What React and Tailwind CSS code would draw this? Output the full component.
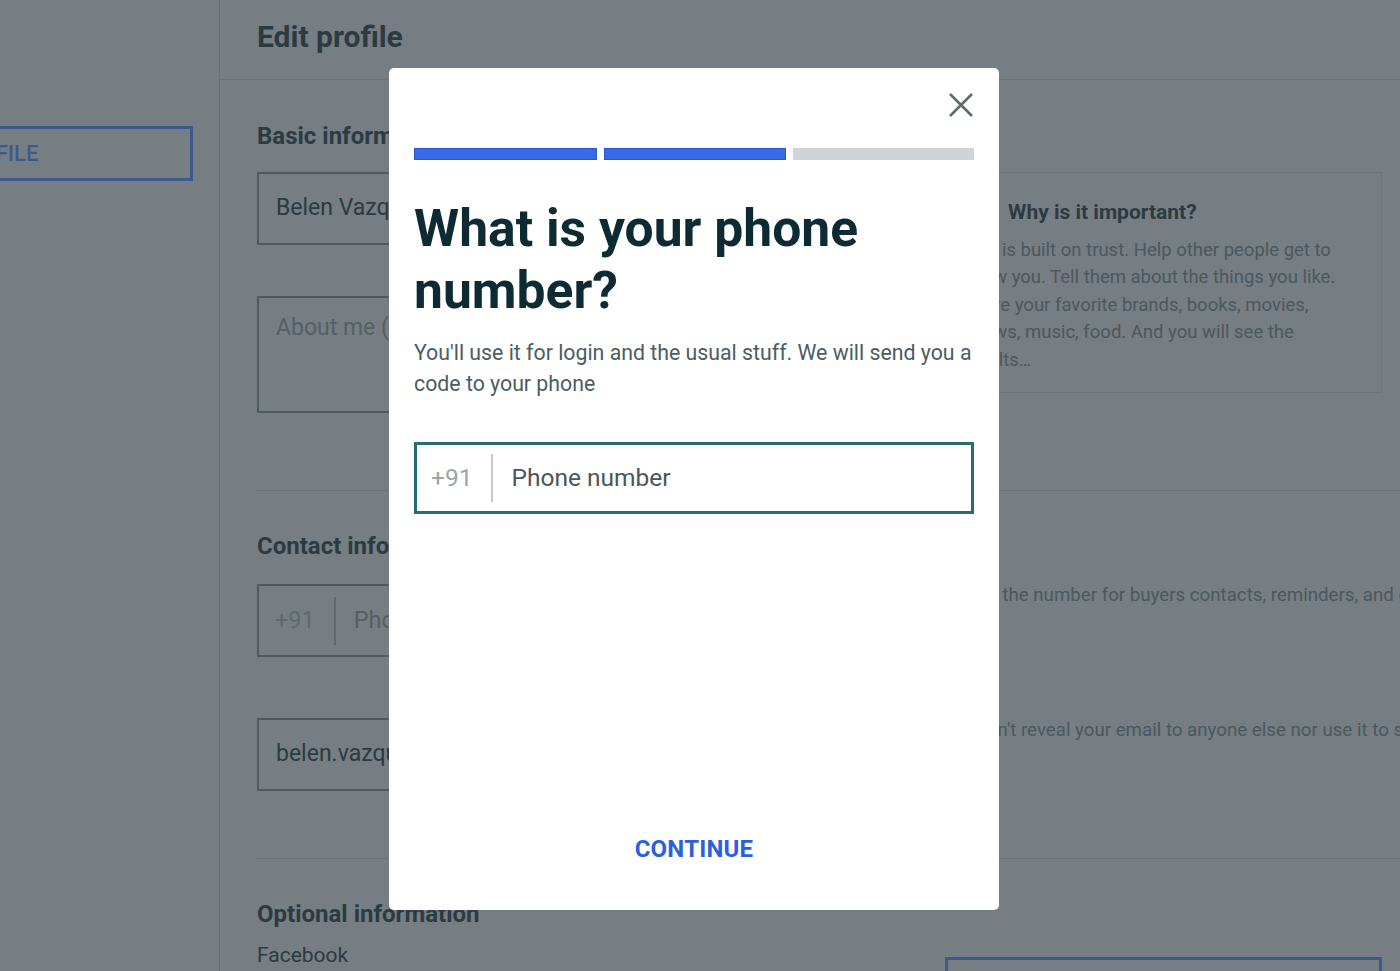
import React from "react";

// Dimmed page behind the modal (colours are already the overlaid tones)
const ProfilePage = () => {
  return (
    <div className="flex h-full w-full">
      {/* Sidebar */}
      <aside className="w-[220px] shrink-0 border-r border-[#69737a]">
        <div className="mt-[126px] -ml-[150px] flex h-[55px] w-[343px] items-center border-[3px] border-[#3d5a8f] pl-[42px]">
          <span className="text-[22px] font-medium text-[#3d5a8f] whitespace-nowrap">
            VIEW PROFILE
          </span>
        </div>
      </aside>

      {/* Main */}
      <main className="min-w-0 flex-1">
        <header className="flex h-[80px] items-center border-b border-[#69737a] pl-[37px] pb-[6px]">
          <h1 className="text-[30px] font-bold text-[#2c3b41]">Edit profile</h1>
        </header>

        <div className="pl-[37px]">
          {/* Basic information */}
          <section className="border-b border-[#69737a] pt-[43px] pb-[77px]">
            <h2 className="text-[24px] font-bold leading-[26px] text-[#2c3b41]">
              Basic information
            </h2>
            <div className="mt-[23px] flex gap-[48px]">
              <div className="flex w-[640px] shrink-0 flex-col gap-[51px]">
                <div className="flex h-[73px] items-center border-2 border-[#4d5a60] px-[17px] text-[23px] text-[#2c3b41]">
                  Belen Vazquez
                </div>
                <div className="h-[117px] border-2 border-[#4d5a60] px-[17px] pt-[13px] text-[23px] text-[#555f65]">
                  About me (optional)
                </div>
              </div>
              <div className="h-[221px] w-[437px] shrink-0 border border-[#6b757b] pl-[17px] pr-[42px] pt-[24px]">
                <div className="flex items-center gap-[15px]">
                  <div className="h-[30px] w-[30px] rounded-full bg-[#5b666c]" />
                  <h3 className="text-[21px] font-bold text-[#2c3b41]">Why is it important?</h3>
                </div>
                <p className="mt-[8px] text-[18.5px] leading-[27.5px] text-[#4c585e]">
                  OLX is built on trust. Help other people get to know you. Tell them about the
                  things you like. Share your favorite brands, books, movies, shows, music, food. And
                  you will see the results…
                </p>
              </div>
            </div>
          </section>

          {/* Contact information */}
          <section className="border-b border-[#69737a] pt-[42px] pb-[67px]">
            <h2 className="text-[24px] font-bold leading-[26px] text-[#2c3b41]">
              Contact information
            </h2>
            <div className="mt-[25px] flex gap-[48px]">
              <div className="flex h-[73px] w-[640px] shrink-0 items-center border-2 border-[#4d5a60] text-[23.5px]">
                <span className="pl-[16px] pr-[19px] text-[#5e696e]">+91</span>
                <span className="h-[48px] w-[2px] bg-[#5e696e]" />
                <span className="pl-[18px] text-[#555f65]">Phone number</span>
              </div>
              <p className="-mt-[2px] -ml-[8px] whitespace-nowrap text-[18.7px] leading-[27px] text-[#4c585e]">
                We use the number for buyers contacts, reminders, and other notifications.
              </p>
            </div>
            <div className="mt-[61px] flex gap-[48px]">
              <div className="flex h-[73px] w-[640px] shrink-0 items-center border-2 border-[#4d5a60] px-[17px] text-[23px] text-[#2c3b41]">
                belen.vazquez@gmail.com
              </div>
              <p className="-mt-[1px] -ml-[3px] whitespace-nowrap text-[18.7px] leading-[27px] text-[#4c585e]">
                We won't reveal your email to anyone else nor use it to send you spam.
              </p>
            </div>
          </section>

          {/* Optional information */}
          <section className="pt-[42px]">
            <h2 className="text-[24px] font-bold leading-[26px] text-[#2c3b41]">
              Optional information
            </h2>
            <div className="mt-[10px] flex gap-[48px]">
              <div className="w-[640px] shrink-0 pt-[3px] text-[21px] text-[#2c3b41]">Facebook</div>
              <div className="mt-[20px] h-[60px] w-[437px] shrink-0 border-[3px] border-[#3d5a8f]" />
            </div>
          </section>
        </div>
      </main>
    </div>
  );
};

const PhoneModal = () => {
  const steps = [true, true, false];

  return (
    <div className="absolute left-[389px] top-[68px] flex h-[842px] w-[610px] flex-col rounded-[5px] bg-white px-[25px] pt-[24px]">
      <div className="flex justify-end">
        <button className="flex h-[26px] w-[26px] items-center justify-center text-[#5b6b70]">
          <svg width="26" height="26" viewBox="0 0 26 26" fill="none" stroke="currentColor" strokeWidth="2.6">
            <path d="M2 2 L24 24 M24 2 L2 24" />
          </svg>
        </button>
      </div>

      {/* Progress */}
      <div className="mt-[30px] flex gap-[7px]">
        {steps.map((done, i) => (
          <div
            key={i}
            className={`h-[12px] flex-1 ${
              done ? "border border-[#2457d6] bg-[#3a6ae2]" : "bg-[#d0d4d7]"
            }`}
          />
        ))}
      </div>

      <h2 className="mt-[38px] text-[51.6px] font-bold leading-[62px] text-[#0e2a33]">
        What is your phone number?
      </h2>

      <p className="mt-[15px] text-[21.3px] leading-[31px] text-[#4b5d63]">
        You'll use it for login and the usual stuff. We will send you a code to your phone
      </p>

      <div className="mt-[43px] flex h-[72px] items-center border-[3px] border-[#2a6b72]">
        <span className="pl-[14px] pr-[19px] text-[24.5px] text-[#9aa6a9]">+91</span>
        <span className="h-[48px] w-[2px] bg-[#c3c9cc]" />
        <span className="pl-[18px] text-[24.5px] text-[#4b5659]">Phone number</span>
      </div>

      <div className="mt-auto mb-[43px] flex justify-center">
        <button className="text-[24px] font-bold tracking-[0.2px] text-[#2d5fdc]">CONTINUE</button>
      </div>
    </div>
  );
};

export default function App() {
  return (
    <div
      className="relative h-[971px] w-[1400px] overflow-hidden bg-[#767d83]"
      style={{ fontFamily: "Roboto, 'Noto Sans', sans-serif" }}
    >
      <ProfilePage />
      <PhoneModal />
    </div>
  );
}
